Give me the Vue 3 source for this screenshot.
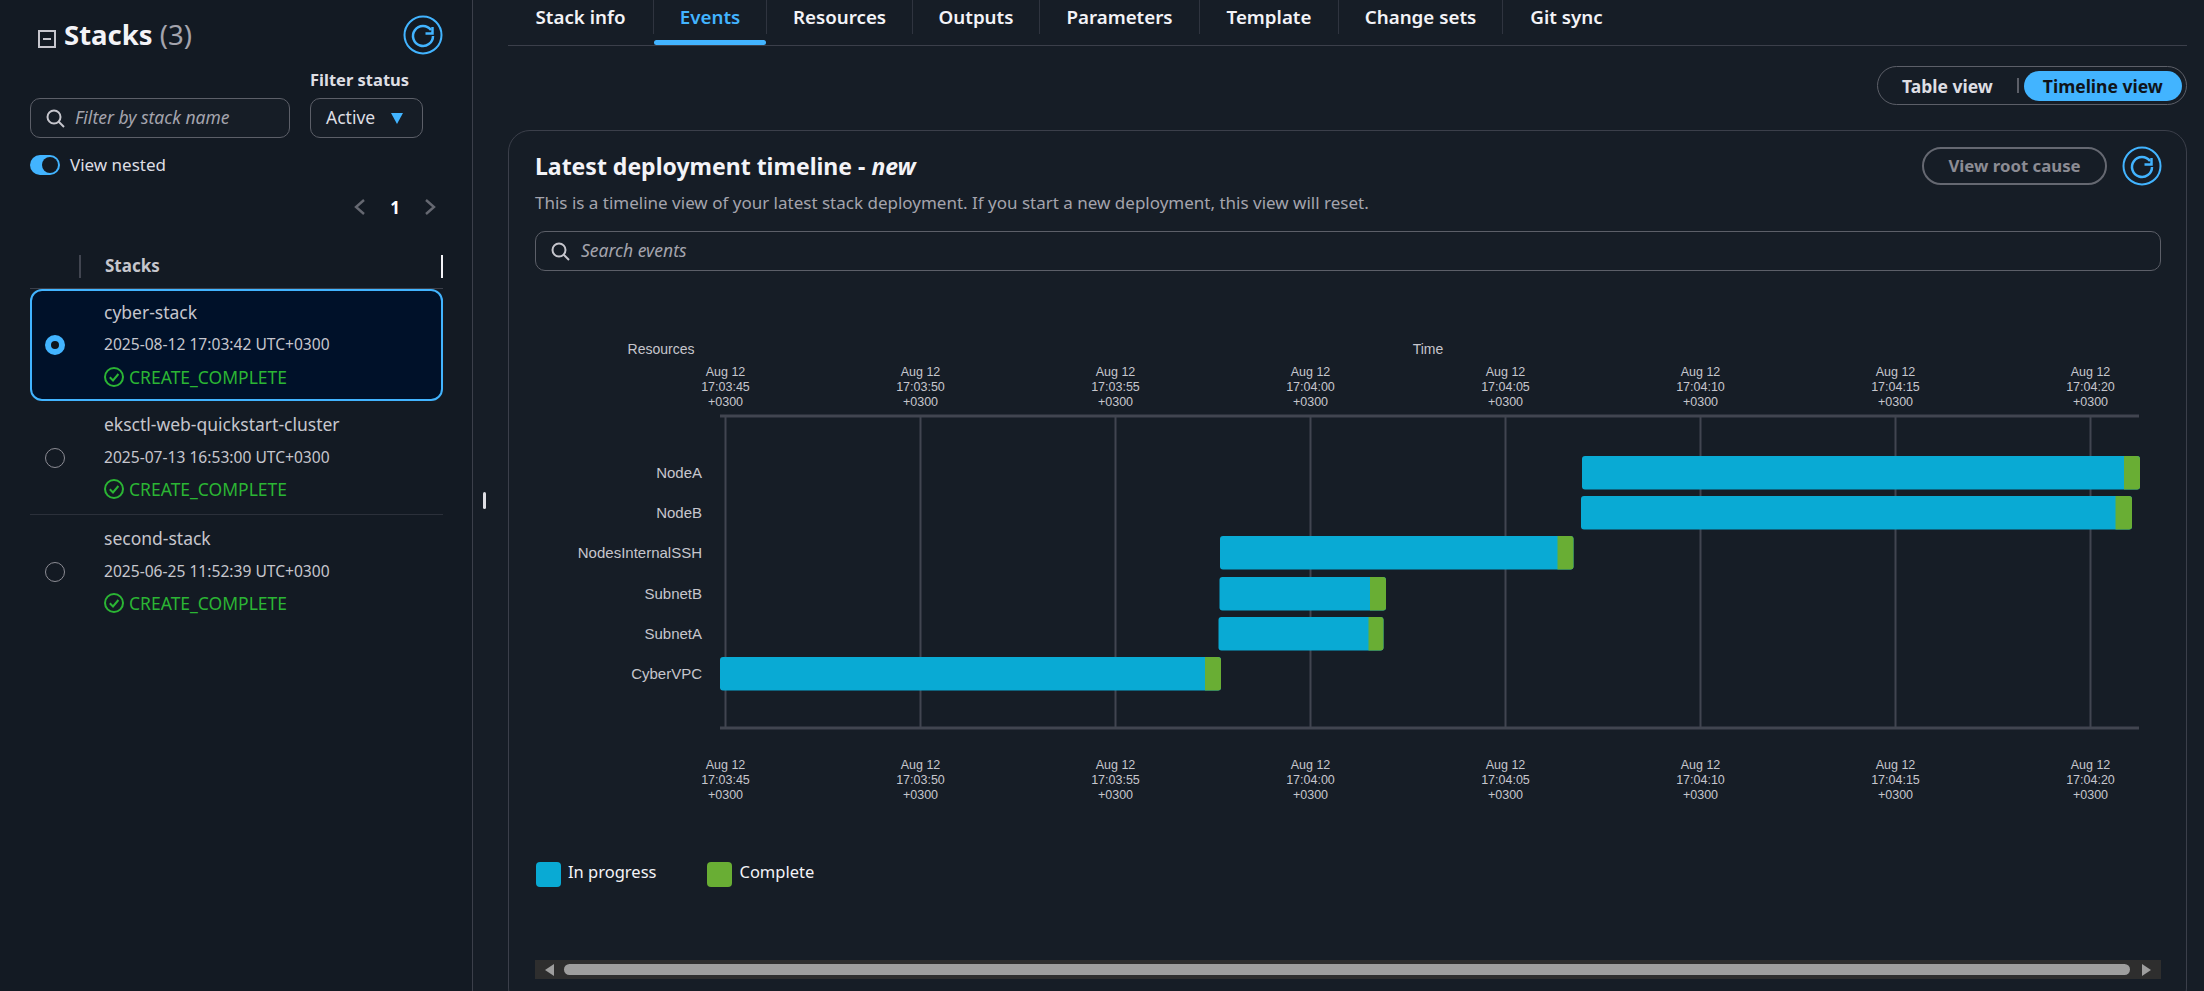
<script setup>
const tabs = [
  { label: 'Stack info', w: 146 },
  { label: 'Events', w: 113, active: true },
  { label: 'Resources', w: 146 },
  { label: 'Outputs', w: 127 },
  { label: 'Parameters', w: 160 },
  { label: 'Template', w: 139 },
  { label: 'Change sets', w: 164 },
  { label: 'Git sync', w: 127 },
];

const stacks = [
  { name: 'cyber-stack', date: '2025-08-12 17:03:42 UTC+0300', status: 'CREATE_COMPLETE', selected: true },
  { name: 'eksctl-web-quickstart-cluster', date: '2025-07-13 16:53:00 UTC+0300', status: 'CREATE_COMPLETE' },
  { name: 'second-stack', date: '2025-06-25 11:52:39 UTC+0300', status: 'CREATE_COMPLETE' },
];

// chart coordinates are written in page pixels, OX/OY move them into the svg
const OX = 511;
const OY = 271;
const ticks = ['17:03:45', '17:03:50', '17:03:55', '17:04:00', '17:04:05', '17:04:10', '17:04:15', '17:04:20'].map((t, i) => ({
  t,
  x: 725.5 + 195 * i - OX,
}));

const bars = [
  { name: 'NodeA', y: 456, x1: 1582, g: 2124, x2: 2140 },
  { name: 'NodeB', y: 496, x1: 1581, g: 2115.5, x2: 2132 },
  { name: 'NodesInternalSSH', y: 536, x1: 1220, g: 1557.5, x2: 1573.5 },
  { name: 'SubnetB', y: 577, x1: 1219.5, g: 1370, x2: 1386 },
  { name: 'SubnetA', y: 617, x1: 1218.5, g: 1368.5, x2: 1383.5 },
  { name: 'CyberVPC', y: 657, x1: 720, g: 1205, x2: 1221 },
];
</script>

<template>
  <div class="page">
    <aside class="sidebar">
      <div class="side-head">
        <div class="side-title">
          <svg class="collapse" width="18" height="18" viewBox="0 0 18 18">
            <rect x="1" y="1" width="16" height="16" fill="none" stroke="#c6c6cd" stroke-width="2" />
            <line x1="5" y1="9" x2="13" y2="9" stroke="#c6c6cd" stroke-width="2" />
          </svg>
          <h1>Stacks <span>(3)</span></h1>
        </div>
        <button class="round-btn">
          <svg width="40" height="40" viewBox="0 0 40 40" fill="none" stroke="#42b4ff" stroke-width="2">
            <circle cx="20" cy="20" r="18.5" />
            <path d="M28 15 A10 10 0 1 0 30 21" stroke-width="2.5" />
            <path d="M29.5 12 V18.5 H22.5" stroke-width="2.5" />
          </svg>
        </button>
      </div>

      <div class="filters">
        <div class="input side-search">
          <svg width="20" height="20" viewBox="0 0 20 20" fill="none" stroke="#c6c6cd" stroke-width="2">
            <circle cx="9" cy="9" r="6.5" />
            <line x1="13.5" y1="13.5" x2="19" y2="19" />
          </svg>
          <span>Filter by stack name</span>
        </div>
        <div class="filter-status">
          <label>Filter status</label>
          <div class="input select">
            <span>Active</span>
            <i class="caret"></i>
          </div>
        </div>
      </div>

      <div class="nested">
        <span class="toggle"><i></i></span>
        <span class="nested-label">View nested</span>
      </div>

      <div class="pager">
        <svg width="14" height="18" viewBox="0 0 14 18" fill="none" stroke="#656871" stroke-width="2.4"><path d="M11 2 L3 9 L11 16" /></svg>
        <b>1</b>
        <svg width="14" height="18" viewBox="0 0 14 18" fill="none" stroke="#656871" stroke-width="2.4"><path d="M3 2 L11 9 L3 16" /></svg>
      </div>

      <div class="table-head">
        <span class="col-check"></span>
        <span class="col-name">Stacks</span>
      </div>

      <div class="rows">
        <div v-for="s in stacks" :key="s.name" class="row" :class="{ selected: s.selected }">
          <span class="radio" :class="{ on: s.selected }"></span>
          <div class="row-body">
            <div class="row-name">{{ s.name }}</div>
            <div class="row-date">{{ s.date }}</div>
            <div class="row-status">
              <svg width="20" height="20" viewBox="0 0 20 20" fill="none" stroke="#2bb534" stroke-width="2">
                <circle cx="10" cy="10" r="9" />
                <path d="M5.8 10.2 L9 13.4 L14.4 7" />
              </svg>
              {{ s.status }}
            </div>
          </div>
        </div>
      </div>
    </aside>
    <i class="drag-handle"></i>

    <main class="main">
      <nav class="tabs">
        <div
          v-for="(t, i) in tabs"
          :key="t.label"
          class="tab"
          :class="{ active: t.active, last: i === tabs.length - 1 }"
          :style="{ width: t.w + 'px' }"
        >
          <span>{{ t.label }}</span>
        </div>
      </nav>

      <div class="view-bar">
        <div class="seg">
          <span class="seg-item">Table view</span>
          <i class="seg-sep"></i>
          <span class="seg-item on">Timeline view</span>
        </div>
      </div>

      <section class="card">
        <div class="card-head">
          <h2>Latest deployment timeline - <em>new</em></h2>
          <div class="card-actions">
            <span class="root-btn">View root cause</span>
            <button class="round-btn">
              <svg width="40" height="40" viewBox="0 0 40 40" fill="none" stroke="#42b4ff" stroke-width="2">
                <circle cx="20" cy="20" r="18.5" />
                <path d="M28 15 A10 10 0 1 0 30 21" stroke-width="2.5" />
                <path d="M29.5 12 V18.5 H22.5" stroke-width="2.5" />
              </svg>
            </button>
          </div>
        </div>
        <p class="card-desc">This is a timeline view of your latest stack deployment. If you start a new deployment, this view will reset.</p>
        <div class="input event-search">
          <svg width="20" height="20" viewBox="0 0 20 20" fill="none" stroke="#c6c6cd" stroke-width="2">
            <circle cx="9" cy="9" r="6.5" />
            <line x1="13.5" y1="13.5" x2="19" y2="19" />
          </svg>
          <span>Search events</span>
        </div>

        <svg class="chart" width="1650" height="570" viewBox="0 0 1650 570">
          <g font-family="'Liberation Sans', Arial, sans-serif">
            <text :x="661 - OX" :y="354 - OY" class="head-label" text-anchor="middle">Resources</text>
            <text :x="1428 - OX" :y="354 - OY" class="head-label" text-anchor="middle">Time</text>

            <g v-for="k in ticks" :key="k.t">
              <line :x1="k.x" :x2="k.x" :y1="416 - OY" :y2="728 - OY" stroke="#414550" stroke-width="2" />
              <text class="tick" text-anchor="middle">
                <tspan :x="k.x" :y="376 - OY">Aug 12</tspan>
                <tspan :x="k.x" :y="391 - OY">{{ k.t }}</tspan>
                <tspan :x="k.x" :y="406 - OY">+0300</tspan>
              </text>
              <text class="tick" text-anchor="middle">
                <tspan :x="k.x" :y="769 - OY">Aug 12</tspan>
                <tspan :x="k.x" :y="784 - OY">{{ k.t }}</tspan>
                <tspan :x="k.x" :y="799 - OY">+0300</tspan>
              </text>
            </g>
            <line :x1="720 - OX" :x2="2139 - OX" :y1="416 - OY" :y2="416 - OY" stroke="#414550" stroke-width="3" />
            <line :x1="720 - OX" :x2="2139 - OX" :y1="728 - OY" :y2="728 - OY" stroke="#414550" stroke-width="3" />

            <g v-for="b in bars" :key="b.name">
              <text class="res-label" :x="702 - OX" :y="b.y + 22 - OY" text-anchor="end">{{ b.name }}</text>
              <rect :x="b.x1 - OX" :y="b.y - OY" :width="b.x2 - b.x1" height="33.5" rx="3" fill="#09aad4" />
              <path
                :d="`M${b.g - OX} ${b.y - OY} H${b.x2 - OX - 3} q3 0 3 3 V${b.y - OY + 30.5} q0 3 -3 3 H${b.g - OX} Z`"
                fill="#69ae34"
              />
            </g>
          </g>
        </svg>

        <div class="legend">
          <span class="legend-item"><i class="swatch blue"></i>In progress</span>
          <span class="legend-item"><i class="swatch green"></i>Complete</span>
        </div>

        <div class="scrollbar">
          <i class="arrow left"></i>
          <div class="thumb"></div>
          <i class="arrow right"></i>
        </div>
      </section>
    </main>
  </div>
</template>

<style>
html,
body {
  margin: 0;
  background: #161d26;
  overflow: hidden;
}
</style>

<style scoped>
.page {
  display: flex;
  width: 2204px;
  height: 991px;
  overflow: hidden;
  position: relative;
  background: #161d26;
  color: #dedee3;
  font-family: 'Noto Sans', 'Open Sans', sans-serif;
  font-size: 17.5px;
}

/* sidebar */
.sidebar {
  width: 473px;
  flex-shrink: 0;
  box-sizing: border-box;
  padding: 15px 30px 0;
  background: #131a23;
  border-right: 1px solid #3b3f4a;
}
.side-head {
  display: flex;
  justify-content: space-between;
  align-items: center;
  width: 413px;
  height: 40px;
}
.side-title {
  display: flex;
  align-items: center;
  gap: 8px;
  padding-left: 8px;
}
.collapse {
  margin-top: 7px;
}
.side-title h1 {
  margin: 0;
  font-size: 27.5px;
  font-weight: 700;
  line-height: 40px;
  color: #f3f3f7;
}
.side-title h1 span {
  font-weight: 400;
  color: #a4a4ad;
}
.round-btn {
  width: 40px;
  height: 40px;
  padding: 0;
  border: 0;
  background: none;
  display: block;
}
.round-btn svg {
  display: block;
}
.filters {
  display: flex;
  align-items: flex-end;
  gap: 20px;
  margin-top: 14px;
}
.filter-status label {
  display: block;
  font-size: 16.5px;
  font-weight: 700;
  line-height: 22px;
  margin-bottom: 7px;
  color: #dedee3;
}
.input {
  display: flex;
  align-items: center;
  box-sizing: border-box;
  height: 40px;
  border: 1.5px solid #5c5f68;
  border-radius: 10px;
  background: #161d26;
}
.input span {
  padding-bottom: 2px;
}
.side-search {
  width: 260px;
  padding-left: 14px;
  gap: 10px;
  font-style: italic;
  color: #a4a4ad;
}
.select {
  width: 113px;
  padding: 0 19px 0 15px;
  justify-content: space-between;
  color: #dedee3;
}
.caret {
  width: 0;
  height: 0;
  border-left: 6.5px solid transparent;
  border-right: 6.5px solid transparent;
  border-top: 11px solid #42b4ff;
}
.nested {
  display: flex;
  align-items: center;
  gap: 10px;
  margin-top: 17px;
  height: 20px;
  font-size: 17px;
  color: #dedee3;
}
.nested-label {
  padding-bottom: 2px;
}
.toggle {
  width: 30px;
  height: 20px;
  border-radius: 10px;
  background: #42b4ff;
  display: flex;
  align-items: center;
  justify-content: flex-end;
  padding-right: 2px;
  box-sizing: border-box;
}
.toggle i {
  width: 16px;
  height: 16px;
  border-radius: 50%;
  background: #131a23;
}
.pager {
  display: flex;
  justify-content: flex-end;
  align-items: center;
  gap: 23px;
  margin-top: 22px;
  height: 20px;
  padding-right: 6px;
  width: 407px;
}
.pager b {
  font-size: 17px;
  color: #fff;
}
.table-head {
  display: flex;
  align-items: center;
  width: 413px;
  height: 24px;
  margin-top: 37px;
  padding-bottom: 10px;
  border-bottom: 1px solid #3b3f4a;
  position: relative;
  box-sizing: content-box;
  font-size: 17px;
  font-weight: 700;
  color: #c6c6cd;
}
.col-check {
  width: 49px;
  height: 23px;
  border-right: 2px solid #414550;
}
.col-name {
  margin-left: 24px;
  flex: 1;
  height: 23px;
  line-height: 22px;
  border-right: 2px solid #f3f3f7;
}
.rows {
  width: 413px;
}
.row {
  display: flex;
  align-items: center;
  box-sizing: border-box;
  height: 113px;
  padding-left: 15px;
  border-bottom: 1px solid #2b303a;
}
.row:nth-child(2) {
  height: 114px;
}
.row:last-child {
  border-bottom: 0;
}
.row.selected {
  height: 112px;
  padding-left: 13px;
  border: 2px solid #42b4ff;
  border-radius: 12px;
  background: #001129;
}
.radio {
  width: 20px;
  height: 20px;
  box-sizing: border-box;
  border-radius: 50%;
  border: 1.5px solid #8c8c94;
  flex-shrink: 0;
}
.radio.on {
  border: 6.5px solid #42b4ff;
  background: #0f141a;
}
.row-body {
  margin-left: 39px;
  padding-bottom: 2px;
  display: flex;
  flex-direction: column;
  gap: 10.5px;
  color: #c6c6cd;
}
.row-name,
.row-date,
.row-status {
  line-height: 22px;
}
.row-date {
  font-size: 15.6px;
}
.row-status {
  display: flex;
  align-items: center;
  gap: 5px;
  color: #2bb534;
}
.drag-handle {
  position: absolute;
  left: 483px;
  top: 492px;
  width: 3px;
  height: 17px;
  background: #dedee3;
  border-radius: 2px;
}

/* main */
.main {
  flex: 1;
  min-width: 0;
  box-sizing: border-box;
  padding: 0 17px 0 35px;
}
.tabs {
  display: flex;
  height: 45px;
  border-bottom: 1px solid #3b3f4a;
}
.tab {
  box-sizing: border-box;
  height: 34px;
  display: flex;
  align-items: center;
  justify-content: center;
  font-weight: 600;
  font-size: 18.75px;
  color: #f3f3f7;
  border-right: 1px solid #2f343f;
  position: relative;
}
.tab span {
  padding-bottom: 1px;
}
.tab.last {
  border-right: 0;
}
.tab.active {
  color: #42b4ff;
}
.tab.active::after {
  content: '';
  position: absolute;
  left: 0;
  right: 0;
  top: 40px;
  height: 5px;
  border-radius: 3px;
  background: #42b4ff;
}
.view-bar {
  display: flex;
  justify-content: flex-end;
  margin-top: 20px;
}
.seg {
  display: flex;
  align-items: center;
  box-sizing: border-box;
  width: 310px;
  height: 39px;
  padding-right: 4px;
  border: 1.5px solid #5c5f68;
  border-radius: 20px;
}
.seg-item {
  font-weight: 700;
  font-size: 17.5px;
  color: #dedee3;
  padding-left: 24px;
  width: 115px;
}
.seg-sep {
  width: 2px;
  height: 15px;
  background: #5c5f68;
  margin: 0 5px 0 0;
}
.seg-item.on {
  width: 159px;
  padding: 0;
  height: 30px;
  line-height: 30px;
  text-align: center;
  border-radius: 15px;
  background: #42b4ff;
  color: #0f141a;
}
.card {
  box-sizing: border-box;
  height: 880px;
  margin-top: 25px;
  padding: 16px 25px 0 26px;
  border: 1.5px solid #3b3f4a;
  border-radius: 22px;
}
.card-head {
  display: flex;
  justify-content: space-between;
  align-items: center;
  height: 38px;
}
.card-head h2 {
  margin: 0;
  font-size: 23px;
  font-weight: 700;
  color: #f3f3f7;
}
.card-actions {
  display: flex;
  align-items: center;
  gap: 15px;
  margin-right: -1px;
}
.root-btn {
  box-sizing: border-box;
  width: 185px;
  height: 38px;
  line-height: 34px;
  text-align: center;
  border: 2px solid #656871;
  border-radius: 19px;
  font-weight: 700;
  font-size: 16.8px;
  color: #8c8c94;
}
.card-desc {
  margin: 6px 0 0;
  font-size: 17px;
  line-height: 24px;
  color: #a4a4ad;
}
.event-search {
  margin-top: 16px;
  padding-left: 14px;
  gap: 11px;
  font-style: italic;
  color: #a4a4ad;
}
.chart {
  display: block;
  margin-left: -24px;
}
.head-label {
  font-size: 14px;
  fill: #c6c6cd;
}
.tick {
  font-size: 12.5px;
  fill: #c6c6cd;
}
.res-label {
  font-size: 15px;
  fill: #c6c6cd;
}
.legend {
  display: flex;
  gap: 51px;
  margin-top: 21px;
  height: 25px;
  margin-left: 1px;
}
.legend-item {
  display: flex;
  gap: 7px;
  font-size: 16.5px;
  line-height: 20px;
  color: #f3f3f7;
}
.swatch {
  width: 25px;
  height: 25px;
  border-radius: 4px;
}
.swatch.blue {
  background: #09aad4;
}
.swatch.green {
  background: #69ae34;
}
.scrollbar {
  display: flex;
  align-items: center;
  box-sizing: border-box;
  height: 19px;
  margin-top: 73px;
  width: 1626px;
  padding: 0 10px;
  background: #2e2e2e;
}
.thumb {
  flex: 1;
  height: 11px;
  margin: 0 12px 0 10px;
  border-radius: 6px;
  background: #9e9e9e;
}
.arrow {
  width: 0;
  height: 0;
  border-top: 6px solid transparent;
  border-bottom: 6px solid transparent;
}
.arrow.left {
  border-right: 9px solid #9e9e9e;
}
.arrow.right {
  border-left: 9px solid #9e9e9e;
}
</style>
